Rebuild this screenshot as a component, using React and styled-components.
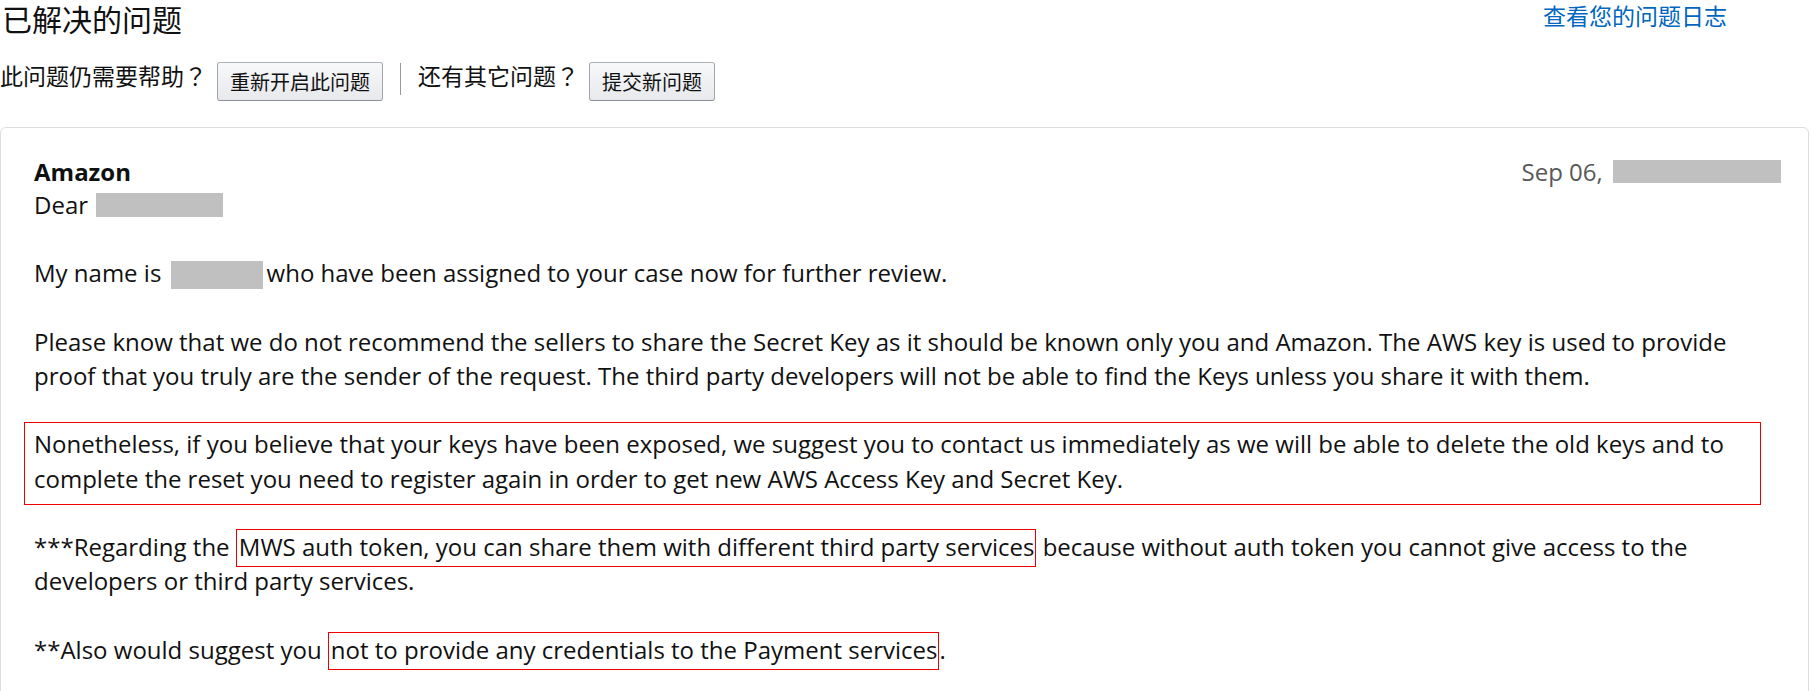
import React from 'react';
import styled, { createGlobalStyle } from 'styled-components';

const GlobalStyle = createGlobalStyle`
  html, body {
    margin: 0;
    padding: 0;
    background: #fff;
  }
  body {
    font-family: "Open Sans", "Noto Sans CJK SC", sans-serif;
    color: #111;
  }
`;

const cjk = `"Noto Sans CJK SC", "Noto Sans", sans-serif`;

// Page shell
const Page = styled.div`
  width: 1809px;
`;

const Header = styled.header`
  display: flex;
  justify-content: space-between;
  align-items: flex-start;
  padding: 0 82px 0 2px;
`;

const Title = styled.h1`
  margin: 0;
  font-family: ${cjk};
  font-size: 30px;
  font-weight: 400;
  line-height: 36px;
  color: #111;
`;

const LogLink = styled.a`
  font-family: ${cjk};
  font-size: 23px;
  line-height: 30px;
  color: #0066c0;
  text-decoration: none;
`;

// Reopen / new case bar
const ActionBar = styled.div`
  display: flex;
  align-items: flex-start;
  margin: 26px 0 26px;
`;

const Prompt = styled.span`
  font-family: ${cjk};
  font-size: 23px;
  line-height: 26px;
  margin-right: 10px;
  color: #111;
`;

// full-width question mark sits centred in its cell, as in the original
const Qmark = styled.span`
  font-family: "Noto Sans CJK JP", ${cjk};
`;

const ActionButton = styled.button`
  height: 39px;
  padding: 0 12px;
  font-family: ${cjk};
  font-size: 20px;
  line-height: 37px;
  color: #111;
  background: linear-gradient(to bottom, #f7f8fa, #e7e9ec);
  border: 1px solid #adb1b8;
  border-color: #adb1b8 #a2a6ac #8d9096;
  border-radius: 3px;
  cursor: pointer;
`;

const Divider = styled.span`
  width: 1px;
  height: 32px;
  margin: 1px 17px 0;
  background: #999;
`;

// Message card
const MessageCard = styled.section`
  border: 1px solid #ddd;
  border-radius: 6px;
  padding: 27px 27px 30px 33px;
  font-size: 24px;
  line-height: 34.2px;
`;

const MessageHead = styled.div`
  display: flex;
  justify-content: space-between;
  line-height: 33px;
`;

const Sender = styled.span`
  font-weight: 700;
  color: #0f1111;
`;

const SentDate = styled.span`
  color: #565959;
`;

const Redacted = styled.span`
  display: inline-block;
  width: ${({ $w }) => $w}px;
  height: ${({ $h }) => $h}px;
  margin: 0 ${({ $after }) => $after || 0}px 0 ${({ $before }) => $before || 0}px;
  vertical-align: -${({ $drop }) => $drop}px;
  background: #c0c0c0;
`;

const Para = styled.p`
  margin: 0 0 34.2px;
  &:last-child {
    margin-bottom: 0;
  }
`;

const BoxedPara = styled.p`
  margin: -5px 20px 25.2px -10px;
  padding: 4px 0 8px 9px;
  border: 1px solid #ee0000;
`;

const Mark = styled.span`
  padding: 0 1px 3px 2px;
  border: 1px solid #ee0000;
`;

export default function App() {
  return (
    <>
      <GlobalStyle />
      <Page>
        <Header>
          <Title>已解决的问题</Title>
          <LogLink href="#">查看您的问题日志</LogLink>
        </Header>

        <ActionBar>
          <Prompt>
            此问题仍需要帮助<Qmark>？</Qmark>
          </Prompt>
          <ActionButton>重新开启此问题</ActionButton>
          <Divider />
          <Prompt>
            还有其它问题<Qmark>？</Qmark>
          </Prompt>
          <ActionButton>提交新问题</ActionButton>
        </ActionBar>

        <MessageCard>
          <MessageHead>
            <Sender>Amazon</Sender>
            <SentDate>
              Sep 06, <Redacted $w={168} $h={23} $drop={2} $before={4} />
            </SentDate>
          </MessageHead>
          <Para>
            Dear <Redacted $w={127} $h={24} $drop={3} $before={2} />
          </Para>
          <Para>
            My name is <Redacted $w={92} $h={28} $drop={7} $before={3} $after={4} />
            who have been assigned to your case now for further review.
          </Para>
          <Para>
            Please know that we do not recommend the sellers to share the Secret Key as it should be
            known only you and Amazon. The AWS key is used to provide proof that you truly are the
            sender of the request. The third party developers will not be able to find the Keys
            unless you share it with them.
          </Para>
          <BoxedPara>
            Nonetheless, if you believe that your keys have been exposed, we suggest you to contact
            us immediately as we will be able to delete the old keys and to complete the reset you
            need to register again in order to get new AWS Access Key and Secret Key.
          </BoxedPara>
          <Para>
            ***Regarding the{' '}
            <Mark>MWS auth token, you can share them with different third party services</Mark>{' '}
            because without auth token you cannot give access to the developers or third party
            services.
          </Para>
          <Para>
            **Also would suggest you{' '}
            <Mark>not to provide any credentials to the Payment services</Mark>.
          </Para>
        </MessageCard>
      </Page>
    </>
  );
}
